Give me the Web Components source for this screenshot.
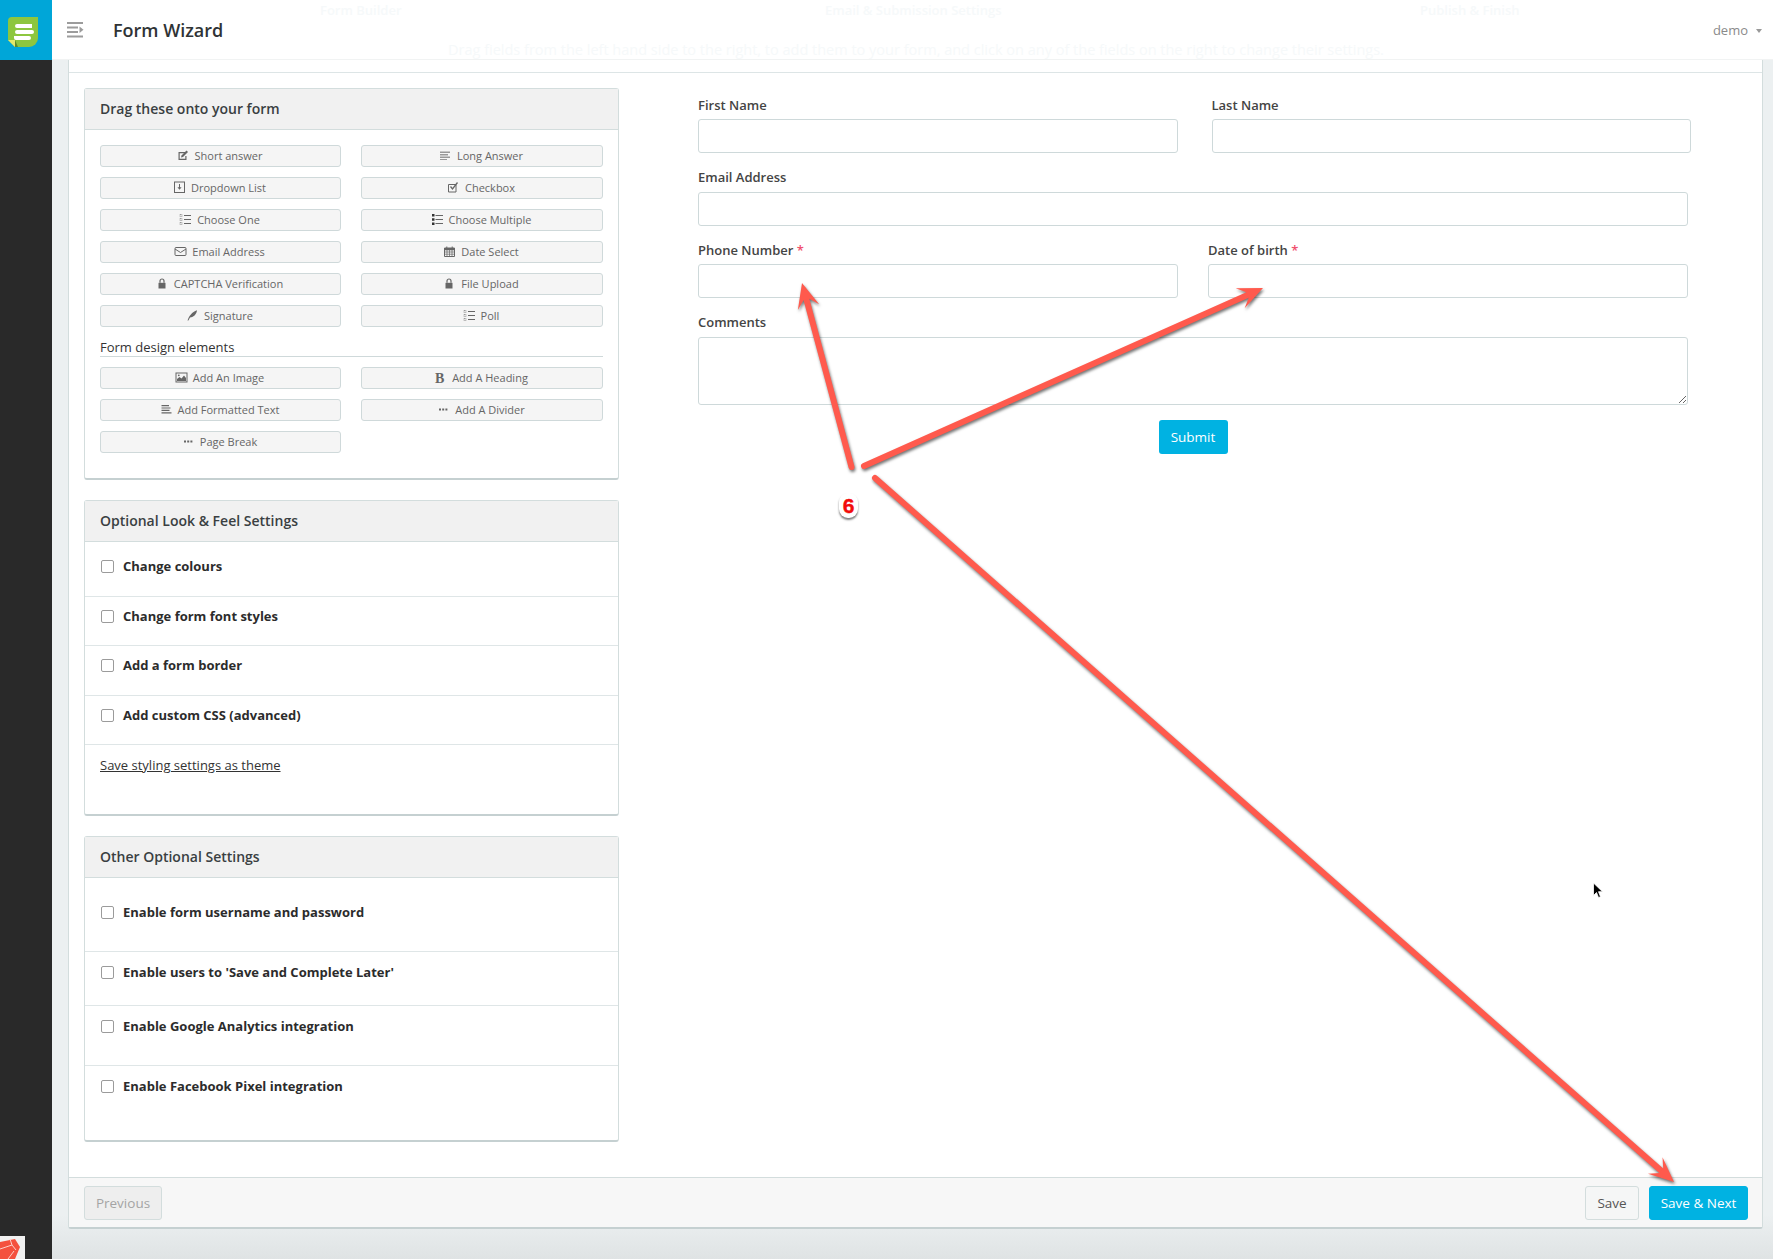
<!DOCTYPE html>
<html>
<head>
<meta charset="utf-8">
<title>Form Wizard</title>
<style>
    html, body { margin: 0; padding: 0; height: 100%; }
    body { font-family: "Open Sans", "Liberation Sans", sans-serif; color: #333; overflow: hidden; }
</style>
</head>
<body>
<app-shell>
    <side-bar slot="side"></side-bar>
    <top-bar slot="top" heading="Form Wizard" user="demo"></top-bar>
    <wizard-card slot="main">
        <tool-panel heading="Drag these onto your form" style="--panel-pad: 15px 15px 25px;">
            <tool-grid>
                <tool-button icon="edit">Short answer</tool-button>
                <tool-button icon="lines">Long Answer</tool-button>
                <tool-button icon="dropdown">Dropdown List</tool-button>
                <tool-button icon="check">Checkbox</tool-button>
                <tool-button icon="listdots">Choose One</tool-button>
                <tool-button icon="listsolid">Choose Multiple</tool-button>
                <tool-button icon="mail">Email Address</tool-button>
                <tool-button icon="calendar">Date Select</tool-button>
                <tool-button icon="lock">CAPTCHA Verification</tool-button>
                <tool-button icon="lock">File Upload</tool-button>
                <tool-button icon="feather">Signature</tool-button>
                <tool-button icon="listdots">Poll</tool-button>
                <grid-heading>Form design elements</grid-heading>
                <tool-button icon="image">Add An Image</tool-button>
                <tool-button icon="bold">Add A Heading</tool-button>
                <tool-button icon="align">Add Formatted Text</tool-button>
                <tool-button icon="dots">Add A Divider</tool-button>
                <tool-button icon="dots">Page Break</tool-button>
            </tool-grid>
        </tool-panel>
        <tool-panel heading="Optional Look &amp; Feel Settings">
            <option-row style="--row-h: 55px; --row-top: 14px;">Change colours</option-row>
            <option-row style="--row-h: 49px; --row-top: 9px;">Change form font styles</option-row>
            <option-row style="--row-h: 50px; --row-top: 9px;">Add a form border</option-row>
            <option-row style="--row-h: 49px; --row-top: 9px;">Add custom CSS (advanced)</option-row>
            <theme-link>Save styling settings as theme</theme-link>
        </tool-panel>
        <tool-panel heading="Other Optional Settings">
            <option-row style="--row-h: 74px; --row-top: 24px;">Enable form username and password</option-row>
            <option-row style="--row-h: 54px; --row-top: 10px;">Enable users to 'Save and Complete Later'</option-row>
            <option-row style="--row-h: 60px; --row-top: 10px;">Enable Google Analytics integration</option-row>
            <option-row style="--row-h: 74px; --row-top: 10px;" last>Enable Facebook Pixel integration</option-row>
        </tool-panel>
        <form-preview slot="form"></form-preview>
    </wizard-card>
    <arrow-overlay slot="overlay"></arrow-overlay>
</app-shell>

<script>
const ICONS = {
    edit: '<path d="M1.500 3h6.500v1.200H2.700v5.600h5.600V7h1.200v4H1.500z" fill="currentColor"/><path d="M4.500 6.500 9.500 1.500l1.500 1.500-5 5-2 .5z" fill="currentColor"/>',
    lines: '<path d="M1 2.500h10v1.400H1zM1 5h8v1.400H1zM1 7.500h10v1.400H1zM1 10h7v1H1z" fill="#999"/>',
    dropdown: '<rect x="1.500" y="1" width="10" height="10.500" fill="none" stroke="currentColor"/><path d="M6 3h1v3.200h1.600L6.500 8.800 4.400 6.200H6z" fill="currentColor"/>',
    check: '<path d="M1.500 3.500h7.500v7.500H1.500z" fill="none" stroke="currentColor"/><path d="M3.500 5.500l2 2.500L10.500 1.500" fill="none" stroke="currentColor" stroke-width="1.300"/>',
    listdots: '<path d="M5 2h7v1H5zM5 6h7v1H5zM5 10h7v1H5z" fill="currentColor"/><path d="M1 1.500h2v2H1zM1 5.500h2v2H1zM1 9.500h2v2H1z" fill="none" stroke="currentColor" stroke-width=".6" stroke-dasharray="1 .5"/>',
    listsolid: '<path d="M4.500 2h7.500v1.100H4.500zM4.500 6h7.500v1.100H4.500zM4.500 10h7.500v1.100H4.500z" fill="currentColor"/><path d="M1 1h2.500v2.500H1zM1 5.200h2.500v2.500H1zM1 9.400h2.500v2.500H1z" fill="#333"/>',
    mail: '<rect x="1" y="2.500" width="11" height="8" rx="1" fill="none" stroke="currentColor"/><path d="M1 4l5.500 3.500L12 4" fill="none" stroke="currentColor"/>',
    calendar: '<path d="M1.500 3h10v8.500h-10z" fill="none" stroke="currentColor"/><path d="M1.500 3h10v2.200h-10zM3.300 1.500h1v2h-1zM8.700 1.500h1v2h-1z" fill="currentColor"/><path d="M1.500 7h10M1.500 9.200h10M4 5v6.500M6.500 5v6.500M9 5v6.500" stroke="currentColor" stroke-width=".7"/>',
    lock: '<path d="M2.500 5.800h7v5.700h-7z" fill="currentColor"/><path d="M4 5.800V4a2 2 0 0 1 4 0v1.800" fill="none" stroke="currentColor" stroke-width="1.200"/>',
    feather: '<path d="M1.500 11.500C3 7 6 3 11 1.200 10.500 5 8 8 4 8.600L2.400 11.500z" fill="currentColor"/>',
    image: '<rect x="1" y="2" width="11" height="9" fill="none" stroke="currentColor"/><path d="M2 10V8l2.500-2 2 1.500L9 4.500 11 7v3z" fill="currentColor"/><circle cx="3.800" cy="4.300" r=".9" fill="currentColor"/>',
    bold: '<text x="1" y="11.500" font-family="Liberation Serif, serif" font-weight="700" font-size="14" fill="currentColor">B</text>',
    align: '<path d="M1.500 2h7.500v1.200H1.500zM1.500 4.400h9v1.200h-9zM1.500 6.800h8v1.200h-8zM1.500 9.200h10v1.200h-10z" fill="currentColor"/>',
    dots: '<path d="M2 5.500h2v2H2zM5.200 5.500h2v2h-2zM8.400 5.500h2v2h-2z" fill="currentColor"/>'
};

class AppShell extends HTMLElement {
    constructor() {
        super();
        this.shadowDOM = this.attachShadow({mode: "open"});
        this.shadowDOM.innerHTML = `
        <style>
            :host {
                display: grid;
                grid-template-columns: 52px 1fr;
                grid-template-rows: 60px 1fr;
                position: relative;
                width: 1773px;
                height: 1259px;
                overflow: hidden;
                background: linear-gradient(#ecf0f1 1215px, #dfe3e4 1259px);
            }
            ::slotted([slot=side]) { grid-row: 1 / 3; }
        </style>
        <slot name="side"></slot>
        <slot name="top"></slot>
        <slot name="main"></slot>
        <slot name="overlay"></slot>`;
    }
}

class SideBar extends HTMLElement {
    constructor() {
        super();
        this.shadowDOM = this.attachShadow({mode: "open"});
        this.shadowDOM.innerHTML = `
        <style>
            :host {
                display: flex;
                flex-direction: column;
                justify-content: space-between;
                background: #292929;
            }
            .brand {
                height: 60px;
                background: #00a6d8;
                display: flex;
                align-items: center;
                justify-content: center;
            }
            .badge { display: block; width: 25px; height: 23px; }
        </style>
        <div class="brand">
            <svg width="30" height="30" viewBox="0 0 30 30" style="margin: 4px 0 0 -7px">
                <path d="M4 0H30V21a9 9 0 0 1-9 9H7L0 23V4a4 4 0 0 1 4-4z" fill="#8dc63f"/>
                <path d="M0 23h7v7z" fill="#e3e86c"/>
                <path d="M7 23l3 7H7z" fill="#5e8a2c"/>
                <path d="M9 7h15v4H9a2 2 0 0 1 0-4zM9 13h15a2 2 0 0 1 0 4H9a2 2 0 0 1 0-4zM6 19h15a2 2 0 0 1 0 4H8a2 2 0 0 1-2-2z" fill="#fff"/>
            </svg>
        </div>
        <svg class="badge" viewBox="0 0 25 23">
            <rect width="25" height="23" fill="#f1f1f1"/>
            <path d="M0 6 15 3 20 11 15 23H0z" fill="#f4513e"/>
            <path d="M0 13 12 9 16 14M12 9 10 3M8 23 14 15" fill="none" stroke="#fbd0ca" stroke-width="1"/>
        </svg>`;
    }
}

class TopBar extends HTMLElement {
    constructor() {
        super();
        this.shadowDOM = this.attachShadow({mode: "open"});
    }

    connectedCallback() {
        this.shadowDOM.innerHTML = `
        <style>
            :host {
                display: flex;
                align-items: center;
                position: relative;
                height: 60px;
                box-sizing: border-box;
                padding: 0 11px 0 15px;
                background: #fff;
                border-bottom: 1px solid #f1f3f3;
                font-family: "Open Sans", "Liberation Sans", sans-serif;
            }
            svg.menu { display: block; margin-top: 1px; }
            h1 {
                margin: 0 0 0 29px;
                font-size: 18px;
                font-weight: 600;
                color: #2f3335;
            }
            .user {
                margin-left: auto;
                font-size: 13px;
                color: #8a8a8a;
                display: flex;
                align-items: center;
                gap: 8px;
                margin-top: 1px;
            }
            .caret {
                border: 3px solid transparent;
                border-top: 4px solid #999;
                border-bottom: 0;
                margin-top: 1px;
            }
            .ghost {
                position: absolute;
                white-space: nowrap;
                color: #f6f9fa;
                font-size: 13px;
                line-height: 18px;
            }
        </style>
        <span class="ghost" style="left: 268px; top: 1px; font-weight: 600;">Form Builder</span>
        <span class="ghost" style="left: 773px; top: 1px; font-weight: 600;">Email &amp; Submission Settings</span>
        <span class="ghost" style="left: 1368px; top: 1px; font-weight: 600;">Publish &amp; Finish</span>
        <span class="ghost" style="left: 396px; top: 41px; font-size: 14.500px;">Drag fields from the left hand side to the right, to add them to your form, and click on any of the fields on the right to change their settings.</span>
        <svg class="menu" width="17" height="16" viewBox="0 0 17 16">
            <path d="M0 0h16v2H0zM0 4.500h11v2H0zM0 9h11v2H0zM0 13.500h16v2H0z" fill="#9c9c9c"/>
            <path d="M12.500 4.500 16.500 7.700 12.500 11z" fill="#9c9c9c"/>
        </svg>
        <h1>${this.getAttribute("heading")}</h1>
        <div class="user">${this.getAttribute("user")}<span class="caret"></span></div>`;
    }
}

class WizardCard extends HTMLElement {
    constructor() {
        super();
        this.shadowDOM = this.attachShadow({mode: "open"});
        this.shadowDOM.innerHTML = `
        <style>
            :host {
                display: flex;
                flex-direction: column;
                height: 1169px;
                margin: 0 10px 0 16px;
                box-sizing: border-box;
                background: #fff;
                border: 1px solid #d3dddd;
                border-top: 0;
                border-bottom: 2px solid #c5d0d1;
                border-radius: 0 0 3px 3px;
            }
            .strip { height: 12px; flex: none; border-bottom: 1px solid #dde5e6; }
            .body { flex: 1; display: flex; padding: 15px 0 0 15px; min-height: 0; }
            .tools { width: 535px; flex: none; display: flex; flex-direction: column; gap: 20px; }
            .form { margin-left: 79px; flex: 1; }
            .foot {
                flex: none;
                display: flex;
                justify-content: space-between;
                height: 50px;
                box-sizing: border-box;
                padding: 8px 14px 0 15px;
                background: #f7f7f7;
                border-top: 1px solid #d3dddd;
            }
            .right { display: flex; gap: 10px; }
            button {
                height: 34px;
                padding: 0;
                box-sizing: border-box;
                white-space: nowrap;
                font: 400 13.500px "Open Sans", "Liberation Sans", sans-serif;
                border-radius: 3px;
                border: 1px solid #d3dddd;
                background: #f5f6f6;
                color: #555;
            }
            .prev { width: 78px; color: #a4a4a4; background: #eeeeee; }
            .save { width: 54px; }
            .next { width: 99px; background: #00b2e2; border-color: #00b2e2; color: #fff; font-weight: 500; }
        </style>
        <div class="strip"></div>
        <div class="body">
            <div class="tools"><slot></slot></div>
            <div class="form"><slot name="form"></slot></div>
        </div>
        <div class="foot">
            <button class="prev">Previous</button>
            <div class="right">
                <button class="save">Save</button>
                <button class="next">Save &amp; Next</button>
            </div>
        </div>`;
    }
}

class ToolPanel extends HTMLElement {
    constructor() {
        super();
        this.shadowDOM = this.attachShadow({mode: "open"});
    }

    connectedCallback() {
        this.shadowDOM.innerHTML = `
        <style>
            :host {
                display: block;
                box-sizing: border-box;
                background: #fff;
                border: 1px solid #d3dddd;
                border-bottom: 2px solid #c5d0d1;
                border-radius: 3px;
            }
            h3 {
                margin: 0;
                height: 41px;
                box-sizing: border-box;
                padding: 0 15px;
                line-height: 40px;
                font-size: 14px;
                font-weight: 600;
                color: #3a3f42;
                background: #f1f1f1;
                border-bottom: 1px solid #d3dddd;
            }
            .inner { padding: var(--panel-pad, 0); }
        </style>
        <h3>${this.getAttribute("heading")}</h3>
        <div class="inner"><slot></slot></div>`;
    }
}

class ToolGrid extends HTMLElement {
    constructor() {
        super();
        this.shadowDOM = this.attachShadow({mode: "open"});
        this.shadowDOM.innerHTML = `
        <style>
            :host {
                display: grid;
                grid-template-columns: 241px 242px;
                column-gap: 20px;
                row-gap: 10px;
            }
        </style>
        <slot></slot>`;
    }
}

class GridHeading extends HTMLElement {
    constructor() {
        super();
        this.shadowDOM = this.attachShadow({mode: "open"});
        this.shadowDOM.innerHTML = `
        <style>
            :host {
                display: block;
                grid-column: 1 / 3;
                height: 20px;
                box-sizing: border-box;
                line-height: 20px;
                font-size: 13px;
                color: #333;
                border-bottom: 1px solid #cfd9da;
            }
        </style>
        <slot></slot>`;
    }
}

class ToolButton extends HTMLElement {
    constructor() {
        super();
        this.shadowDOM = this.attachShadow({mode: "open"});
    }

    connectedCallback() {
        const icon = ICONS[this.getAttribute("icon")] || "";
        this.shadowDOM.innerHTML = `
        <style>
            :host {
                display: flex;
                align-items: center;
                justify-content: center;
                gap: 5px;
                height: 22px;
                box-sizing: border-box;
                background: #f5f5f5;
                border: 1px solid #cfd9da;
                border-radius: 3px;
                font-size: 11px;
                line-height: 18px;
                padding: 0 2px 1px 0;
                color: #666;
            }
            svg { display: block; flex: none; color: #666; }
        </style>
        <svg width="13" height="13" viewBox="0 0 13 13">${icon}</svg>
        <span><slot></slot></span>`;
    }
}

class OptionRow extends HTMLElement {
    constructor() {
        super();
        this.shadowDOM = this.attachShadow({mode: "open"});
        this.shadowDOM.innerHTML = `
        <style>
            :host {
                display: flex;
                align-items: flex-start;
                gap: 9px;
                box-sizing: border-box;
                height: var(--row-h, 50px);
                padding: var(--row-top, 10px) 15px 0 16px;
                border-bottom: 1px solid #dfe6e7;
                font-size: 13px;
                font-weight: 700;
                line-height: 20px;
                color: #2c2c2c;
            }
            :host([last]) { border-bottom: 0; }
            i {
                display: block;
                width: 11px;
                height: 11px;
                margin-top: 4px;
                background: #fff;
                border: 1px solid #9b9b9b;
                border-radius: 2px;
                flex: none;
            }
        </style>
        <i></i><span><slot></slot></span>`;
    }
}

class ThemeLink extends HTMLElement {
    constructor() {
        super();
        this.shadowDOM = this.attachShadow({mode: "open"});
        this.shadowDOM.innerHTML = `
        <style>
            :host {
                display: block;
                height: 69px;
                box-sizing: border-box;
                padding: 10px 15px 0;
                font-size: 13px;
                line-height: 20px;
                color: #333;
            }
            span { text-decoration: underline; }
        </style>
        <span><slot></slot></span>`;
    }
}

class FormField extends HTMLElement {
    constructor() {
        super();
        this.shadowDOM = this.attachShadow({mode: "open"});
    }

    connectedCallback() {
        const star = this.hasAttribute("required") ? ' <b>*</b>' : '';
        const control = this.getAttribute("type") == "area" ? '<textarea></textarea>' : '<input type="text">';
        this.shadowDOM.innerHTML = `
        <style>
            :host { display: block; flex: 1; min-width: 0; }
            label {
                display: block;
                height: 20px;
                line-height: 20px;
                margin-bottom: var(--label-gap, 4px);
                font-size: 13px;
                font-weight: 600;
                color: #444;
            }
            b { color: #f0506e; font-weight: 600; }
            input, textarea {
                display: block;
                width: 100%;
                height: var(--control-h, 34px);
                margin: 0;
                box-sizing: border-box;
                background: #fff;
                border: 1px solid #ced9da;
                border-radius: 3px;
                outline: 0;
            }
        </style>
        <label>${this.getAttribute("label")}${star}</label>
        ${control}`;
    }
}

class FormPreview extends HTMLElement {
    constructor() {
        super();
        this.shadowDOM = this.attachShadow({mode: "open"});
        this.shadowDOM.innerHTML = `
        <style>
            :host { display: flex; flex-direction: column; gap: 14px; padding-top: 7px; }
            .row { display: flex; width: 990px; }
            .wide { width: 993px; gap: 34px; }
            .split { gap: 30px; }
            .foot { display: flex; justify-content: center; margin-top: 1px; width: 990px; }
            button {
                width: 69px;
                height: 34px;
                background: #00b2e2;
                border: 0;
                border-radius: 3px;
                color: #fff;
                font: 500 13.500px "Open Sans", "Liberation Sans", sans-serif;
            }
        </style>
        <div class="row wide">
            <form-field label="First Name"></form-field>
            <form-field label="Last Name"></form-field>
        </div>
        <div class="row"><form-field label="Email Address" style="--label-gap: 5px;"></form-field></div>
        <div class="row split">
            <form-field label="Phone Number" required></form-field>
            <form-field label="Date of birth" required></form-field>
        </div>
        <div class="row">
            <form-field label="Comments" type="area" style="--label-gap: 5px; --control-h: 68px;"></form-field>
        </div>
        <div class="foot"><button>Submit</button></div>`;
    }
}

class ArrowOverlay extends HTMLElement {
    constructor() {
        super();
        this.shadowDOM = this.attachShadow({mode: "open"});
    }

    arrow(x1, y1, x2, y2) {
        const len = Math.hypot(x2 - x1, y2 - y1);
        const ux = (x2 - x1) / len, uy = (y2 - y1) / len;
        const nx = -uy, ny = ux;
        const pt = (back, side) => `${x2 - ux * back + nx * side},${y2 - uy * back + ny * side}`;
        return `<line x1="${x1}" y1="${y1}" x2="${x2 - ux * 12}" y2="${y2 - uy * 12}" stroke="#ff5a4d" stroke-width="6" stroke-linecap="round"/>
            <polygon points="${x2},${y2} ${pt(25, 11)} ${pt(17, 3)} ${pt(17, -3)} ${pt(25, -11)}" fill="#ff5a4d"/>`;
    }

    connectedCallback() {
        this.shadowDOM.innerHTML = `
        <style>
            :host { position: absolute; left: 0; top: 0; width: 1773px; height: 1259px; pointer-events: none; }
            svg.lines { position: absolute; left: 0; top: 0; filter: drop-shadow(1px 2px 1.500px rgba(0,0,0,.55)); }
            .step {
                position: absolute;
                left: 839px;
                top: 493px;
                width: 19px;
                height: 25px;
                background: #fff;
                border-radius: 9px;
                box-shadow: 0 2px 2px rgba(0,0,0,.5);
                color: #f20c0c;
                font: 700 21px/25px "Liberation Sans", sans-serif;
                -webkit-text-stroke: .4px #f20c0c;
                text-align: center;
            }
            svg.cursor { position: absolute; left: 1592px; top: 882px; }
        </style>
        <svg class="lines" width="1773" height="1259">
            ${this.arrow(851.500, 467, 802, 283)}
            ${this.arrow(864, 466, 1263, 288)}
            ${this.arrow(875, 478, 1674, 1182)}
        </svg>
        <div class="step">6</div>
        <svg class="cursor" width="12" height="18" viewBox="0 0 12 18">
            <path d="M1.500 1v12.500l3-3 2 5 2-.8-2-5h4z" fill="#000" stroke="#fff" stroke-width=".8"/>
        </svg>`;
    }
}

customElements.define("app-shell", AppShell);
customElements.define("side-bar", SideBar);
customElements.define("top-bar", TopBar);
customElements.define("wizard-card", WizardCard);
customElements.define("tool-panel", ToolPanel);
customElements.define("tool-grid", ToolGrid);
customElements.define("grid-heading", GridHeading);
customElements.define("tool-button", ToolButton);
customElements.define("option-row", OptionRow);
customElements.define("theme-link", ThemeLink);
customElements.define("form-field", FormField);
customElements.define("form-preview", FormPreview);
customElements.define("arrow-overlay", ArrowOverlay);
</script>
</body>
</html>
